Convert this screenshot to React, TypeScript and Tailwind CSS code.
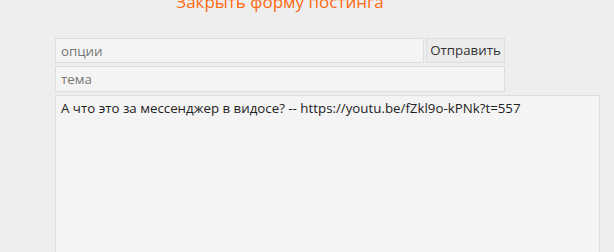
export default function App() {
  return (
    <div className="w-[614px] h-[252px] overflow-hidden bg-[#eeeeee] font-['Open_Sans',sans-serif]">
      <div className="w-[560px] -mt-[9px] text-center text-[17px] leading-[22px] font-medium text-[#ff6a13]">
        Закрыть форму постинга
      </div>
      <div className="mt-[25px] ml-[55px] w-[545px] flex flex-col gap-[3px]">
        <div className="flex gap-[2px] w-[450px]">
          <input
            placeholder="опции"
            className="flex-1 h-[25px] px-[5px] bg-[#f4f4f4] border border-[#dddddd] text-[13.3px] text-[#333] placeholder:text-[#777] outline-none"
          />
          <button className="w-[79px] h-[25px] bg-[#ebebeb] border border-[#dddddd] text-[13.3px] text-[#333]">
            Отправить
          </button>
        </div>
        <input
          placeholder="тема"
          className="w-[450px] h-[26px] px-[5px] bg-[#f4f4f4] border border-[#dddddd] text-[13.3px] text-[#333] placeholder:text-[#777] outline-none"
        />
        <textarea
          defaultValue="А что это за мессенджер в видосе? -- https://youtu.be/fZkl9o-kPNk?t=557"
          className="w-[545px] h-[200px] px-[5px] py-[3px] bg-[#f4f4f4] border border-[#dddddd] text-[13.3px] leading-[18px] text-[#222] outline-none resize-none"
        />
      </div>
    </div>
  );
}
